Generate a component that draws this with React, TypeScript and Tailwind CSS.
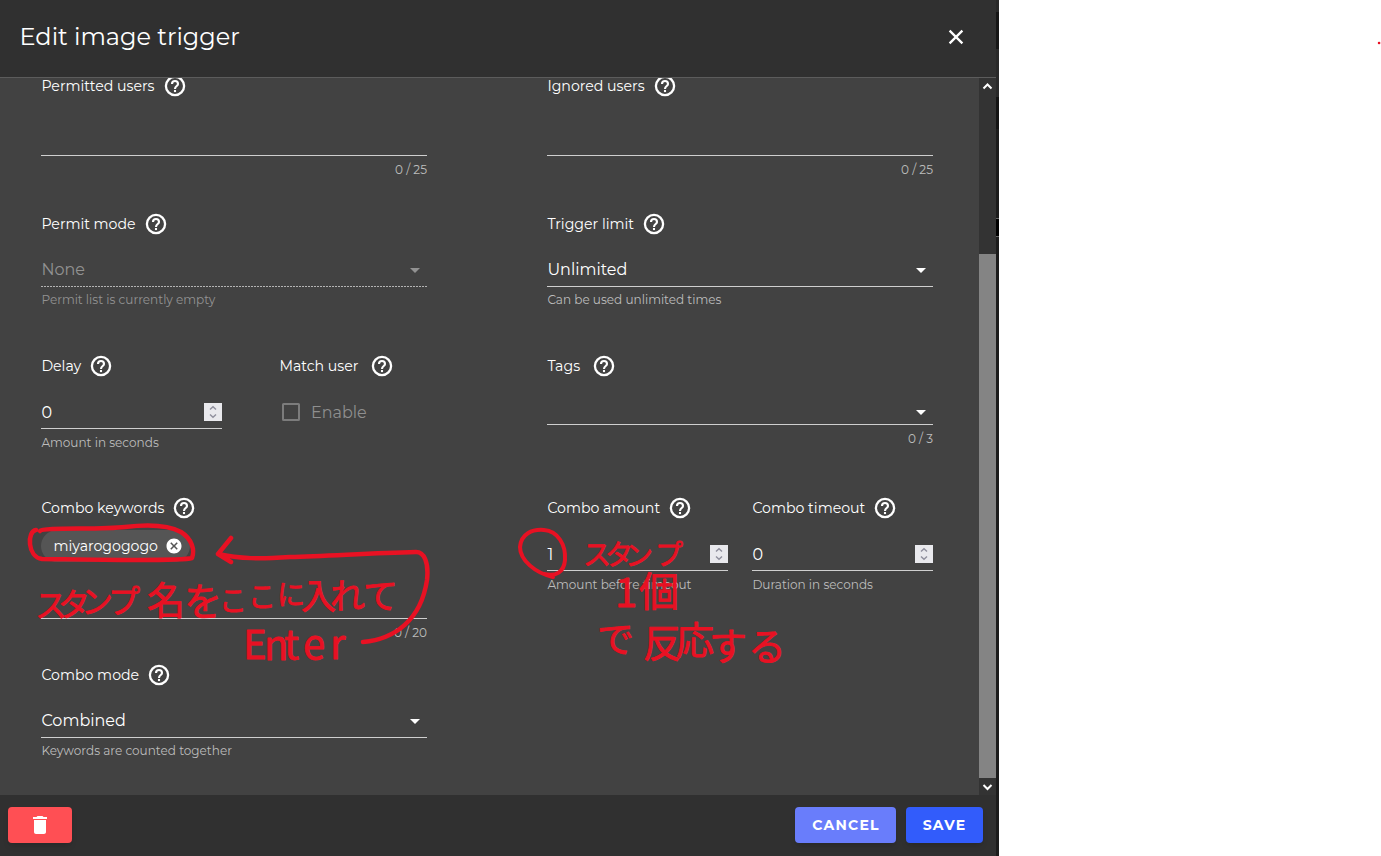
import type { ReactNode } from "react";
import { MdArrowDropDown, MdCancel, MdDelete } from "react-icons/md";
import { clsx } from "clsx";

function HelpIcon() {
  return (
    <svg width="24" height="24" viewBox="0 0 24 24" fill="none" className="shrink-0">
      <circle cx="12" cy="12" r="9.1" stroke="currentColor" strokeWidth="2.3" />
      <path d="M9 10a3 3 0 0 1 6 0c0 2-3 2.2-3 5" stroke="currentColor" strokeWidth="2.1" />
      <path d="M10.95 16h2.1v2.1h-2.1z" fill="currentColor" />
    </svg>
  );
}

function Label({ text, wide }: { text: string; wide?: boolean }) {
  return (
    <div className={clsx("flex h-6 items-center whitespace-nowrap text-[14.15px] text-white", wide ? "gap-3" : "gap-2")}>
      <span className="pl-[0.4px] pt-0.5">{text}</span>
      <HelpIcon />
    </div>
  );
}

interface FieldProps {
  label: string;
  helper?: string;
  counter?: string;
  disabled?: boolean;
  wide?: boolean;
  className?: string;
  boxClass?: string;
  helperClass?: string;
  children?: ReactNode;
}

function Field({
  label, helper, counter, disabled, wide, className,
  boxClass = "h-[50px]", helperClass = "h-[29px]", children,
}: FieldProps) {
  return (
    <div className={className}>
      <Label text={label} wide={wide} />
      <div className={boxClass}>{children}</div>
      <div
        className={clsx(
          "h-px",
          disabled ? "bg-[repeating-linear-gradient(90deg,#b4b4b4_0_2px,#424242_2px_3px)]" : "bg-[#cfcfcf]"
        )}
      />
      <div
        className={clsx(
          "flex items-center whitespace-nowrap pl-[0.4px] text-[12.05px]",
          helperClass,
          disabled ? "text-[#929292]" : "text-[#bdbdbd]"
        )}
      >
        {helper && <span>{helper}</span>}
        {counter && <span className="ml-auto">{counter}</span>}
      </div>
    </div>
  );
}

function SelectValue({ value, disabled }: { value: string; disabled?: boolean }) {
  return (
    <div className={clsx("flex h-full items-center justify-between pt-[17px] text-base", disabled ? "text-[#929292]" : "text-white")}>
      <span className="pl-[0.4px] pt-px">{value}</span>
      <MdArrowDropDown size={24} />
    </div>
  );
}

function NumberValue({ value }: { value: string }) {
  return (
    <div className="flex h-full items-center justify-between pt-[18px] text-base text-white">
      <span className="pl-[0.4px] pt-0.5">{value}</span>
      <span className="flex h-[18px] w-[18px] items-center justify-center bg-[#e9e9ed]">
        <svg width="18" height="18" viewBox="0 0 18 18" fill="none" stroke="#8f8f9d" strokeWidth="1.4">
          <path d="M6 6.5 9 3.7 12 6.5M6 11.5 9 14.3 12 11.5" />
        </svg>
      </span>
    </div>
  );
}

// x and y hold one coordinate per character
const NOTES = [
  { text: "スタンプ", size: 32, x: "35 58 81 108", y: "617 616 613 613" },
  { text: "名を", size: 38, x: "147 184", y: "614 615" },
  { text: "ここに", size: 28, x: "219 248 277", y: "611 607 605" },
  { text: "入れて", size: 35, x: "301 330 363", y: "609 609 609" },
  { text: "Enter", size: 40, x: "243 264 284 303 330", y: "659 660 659 659 659" },
  { text: "スタンプ", size: 28, x: "583 605 625 655", y: "565 565 566 565" },
  { text: "1個", size: 40, x: "615 639", y: "607 606" },
  { text: "で", size: 37, x: "597", y: "653" },
  { text: "反応する", size: 38, x: "643 676 709 748", y: "657 654 660 660" },
];

function Notes() {
  return (
    <svg
      className="pointer-events-none absolute left-0 top-0 h-[856px] w-[1381px] font-['Noto_Sans_CJK_JP',sans-serif]"
      viewBox="0 0 1381 856"
      fill="none"
      stroke="#e81123"
      strokeWidth="4.5"
      strokeLinecap="round"
      strokeLinejoin="round"
    >
      <path d="M40 531C43 527 100 530 125 527C150 524 170 526 181 532C192 539 195 550 192 558C180 562 60 559 42 559C27 557 27 531 36 530" />
      <path d="M363 642C395 639 421 620 427 580C429 562 424 552 416 552C370 553 330 556 290 557C260 559 240 559 218 554M231 538L218 554L231 562" />
      <path d="M553 577C535 573 520 560 520 547C521 534 532 529 544 530C558 531 566 545 565 560C564 572 556 577 544 574" strokeWidth="4" />
      <g fill="#e81123" strokeWidth="0.8">
        {NOTES.map((n, i) => (
          <text key={i} x={n.x} y={n.y} fontSize={n.size}>{n.text}</text>
        ))}
      </g>
      <path d="M1379 43h.1" strokeWidth="2.5" />
    </svg>
  );
}

export default function App() {
  return (
    <div className="relative flex h-[856px] w-[1381px] overflow-hidden bg-white font-['Montserrat','Inter',sans-serif]">
      <div className="flex w-[996px] flex-col">
        <header className="flex h-[78px] items-center justify-between border-b border-[#5c5c5c] bg-[#303030] pb-1 pl-[19.5px] pr-[28.5px] text-white">
          <h1 className="text-2xl">Edit image trigger</h1>
          <svg width="24" height="24" viewBox="0 0 24 24" stroke="currentColor" strokeWidth="2.3">
            <path d="M5.6 5.6 18.4 18.4M18.4 5.6 5.6 18.4" />
          </svg>
        </header>

        <main className="flex h-[717px] overflow-hidden bg-[#424242]">
          <div className="-mt-1 ml-[41px] grid w-[892px] grid-cols-[386px_386px] grid-rows-[138px_142px_142px_300px] gap-x-[120px]">
            <Field label="Permitted users" counter="0 / 25" boxClass="h-[57px]" />
            <Field label="Ignored users" counter="0 / 25" boxClass="h-[57px]" />

            <Field label="Permit mode" helper="Permit list is currently empty" helperClass="h-[27px]" disabled>
              <SelectValue value="None" disabled />
            </Field>
            <Field label="Trigger limit" helper="Can be used unlimited times" helperClass="h-[27px]">
              <SelectValue value="Unlimited" />
            </Field>

            <div className="flex gap-[57px]">
              <Field label="Delay" helper="Amount in seconds" className="w-[181px]">
                <NumberValue value="0" />
              </Field>
              <div>
                <Label text="Match user" wide />
                <div className="mt-[22px] flex h-6 items-center gap-[11px] pl-[3px] text-base text-[#8f8f8f]">
                  <span className="h-[18px] w-[18px] rounded-[1.5px] border-2 border-[#7c7c7c]" />
                  <span className="pt-px">Enable</span>
                </div>
              </div>
            </div>
            <Field label="Tags" counter="0 / 3" boxClass="h-[46px]" wide>
              <div className="flex h-full items-center justify-end pt-[22px] text-white">
                <MdArrowDropDown size={24} />
              </div>
            </Field>

            <div>
              <Field label="Combo keywords" counter="0 / 20" boxClass="h-[98px] pt-[10px]" className="h-[167px]">
                <span className="inline-flex h-8 w-[149px] items-center justify-between rounded-full bg-[#555] pl-[12.5px] pr-[7px] text-[14.15px] text-white">
                  <span className="pt-0.5">miyarogogogo</span>
                  <MdCancel size={18} />
                </span>
              </Field>
              <Field label="Combo mode" helper="Keywords are counted together" helperClass="h-[27px]">
                <SelectValue value="Combined" />
              </Field>
            </div>
            <div className="flex gap-6">
              <Field label="Combo amount" helper="Amount before timeout" className="w-[181px]">
                <NumberValue value="1" />
              </Field>
              <Field label="Combo timeout" helper="Duration in seconds" className="w-[181px]">
                <NumberValue value="0" />
              </Field>
            </div>
          </div>

          <div className="ml-auto flex w-[17px] flex-col items-center bg-[#333] text-white">
            <svg width="17" height="17" viewBox="0 0 17 17" fill="none" stroke="currentColor" strokeWidth="2">
              <path d="M4.5 10.5 8.5 6.5 12.5 10.5" />
            </svg>
            <div className="mt-[159px] h-[524px] w-full bg-[#848484]" />
            <svg width="17" height="17" viewBox="0 0 17 17" fill="none" stroke="currentColor" strokeWidth="2">
              <path d="M4.5 7 8.5 11 12.5 7" />
            </svg>
          </div>
        </main>

        <footer className="flex h-[61px] items-center bg-[#303030] pb-px pl-2 pr-[13px] text-sm font-bold tracking-[1.25px] text-white">
          <button className="flex h-9 w-16 items-center justify-center rounded bg-[#ff4f54] shadow-md">
            <MdDelete size={24} />
          </button>
          <button className="ml-auto h-9 w-[101px] rounded bg-[#697dfb] pl-px shadow-md">CANCEL</button>
          <button className="ml-[10px] h-9 w-[77px] rounded bg-[#325cfb] shadow-md">SAVE</button>
        </footer>
      </div>

      {/* sliver of the page behind the dialog */}
      <div className="flex w-[3px] flex-col bg-[#1c1c1c]">
        <div className="h-3 bg-[#292929]" />
        <div className="h-[37px] bg-[#161616]" />
        <div className="h-12 bg-[#292929]" />
        <div className="h-8 bg-[#141414]" />
        <div className="mt-[89px] h-[19px] border-y border-[#666] bg-black" />
      </div>

      <Notes />
    </div>
  );
}
